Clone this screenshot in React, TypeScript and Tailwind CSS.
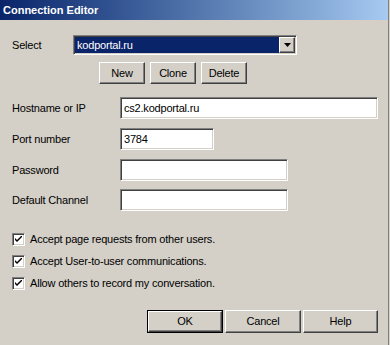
import type { ReactNode } from "react";

const sunken =
  "border border-t-[#808080] border-l-[#808080] border-r-white border-b-white shadow-[inset_1px_1px_0_#404040,inset_-1px_-1px_0_#d4d0c8]";
const raised =
  "border border-t-white border-l-white border-r-[#404040] border-b-[#404040] shadow-[inset_-1px_-1px_0_#808080]";

const Button = ({ children, className = "" }: { children: ReactNode; className?: string }) => (
  <button className={`bg-[#d4d0c8] flex items-center justify-center text-[11px] text-black ${raised} ${className}`}>
    {children}
  </button>
);

const Field = ({ label, value, width }: { label: string; value?: string; width: string }) => (
  <div className="flex items-center h-[22px]">
    <span className="w-[108px]">{label}</span>
    <div className={`h-[22px] bg-white flex items-center pl-[3px] ${sunken} ${width}`}>{value}</div>
  </div>
);

const Check = ({ label }: { label: string }) => (
  <div className="flex items-center h-[13px] gap-[5px]">
    <div className={`w-[13px] h-[13px] bg-white flex items-center justify-center ${sunken}`}>
      <svg width="7" height="7" viewBox="0 0 7 7">
        <path d="M0 2 L0 4 L2 6 L7 1 L7 -1 L2 4 Z" fill="black" />
      </svg>
    </div>
    <span>{label}</span>
  </div>
);

export default function App() {
  return (
    <div className="w-[390px] h-[345px] bg-[#d4d0c8] text-[11px] text-black font-['Liberation_Sans',Arial,sans-serif] overflow-hidden">
      <div className="w-[389px] h-full border-r border-r-[#808080] flex flex-col">
        {/* Title bar */}
        <div className="h-[20px] flex items-center pl-[3px] bg-gradient-to-r from-[#0a246a] to-[#a6caf0] text-white font-bold text-[11px]">
          Connection Editor
        </div>

        <div className="flex flex-col pl-[12px] tracking-[-0.2px]">
          {/* Select row */}
          <div className="flex items-center mt-[15px] h-[20px]">
            <span className="w-[61px]">Select</span>
            <div className={`w-[224px] h-[20px] flex p-[1px] bg-white ${sunken}`}>
              <div className="flex-1 bg-[#0a246a] text-white flex items-center pl-[2px]">kodportal.ru</div>
              <div className={`w-[16px] flex items-center justify-center ${raised} bg-[#d4d0c8]`}>
                <svg width="7" height="4" viewBox="0 0 7 4">
                  <path d="M0 0 H7 L3.5 4 Z" fill="black" />
                </svg>
              </div>
            </div>
          </div>

          {/* New / Clone / Delete */}
          <div className="flex gap-[5px] ml-[87px] mt-[7px]">
            <Button className="w-[46px] h-[22px]">New</Button>
            <Button className="w-[46px] h-[22px]">Clone</Button>
            <Button className="w-[46px] h-[22px]">Delete</Button>
          </div>

          {/* Fields */}
          <div className="flex flex-col mt-[13px] gap-[9px]">
            <Field label="Hostname or IP" value="cs2.kodportal.ru" width="w-[258px]" />
            <Field label="Port number" value="3784" width="w-[94px]" />
            <Field label="Password" width="w-[168px]" />
            <div className="-mt-[1px]">
              <Field label="Default Channel" width="w-[168px]" />
            </div>
          </div>

          {/* Checkboxes */}
          <div className="flex flex-col mt-[22px] gap-[9px]">
            <Check label="Accept page requests from other users." />
            <Check label="Accept User-to-user communications." />
            <Check label="Allow others to record my conversation." />
          </div>

          {/* Dialog buttons */}
          <div className="flex gap-[2px] ml-[135px] mt-[20px]">
            <div className="border border-black">
              <Button className="w-[74px] h-[21px]">OK</Button>
            </div>
            <Button className="w-[76px] h-[23px]">Cancel</Button>
            <Button className="w-[75px] h-[23px]">Help</Button>
          </div>
        </div>
      </div>
    </div>
  );
}
